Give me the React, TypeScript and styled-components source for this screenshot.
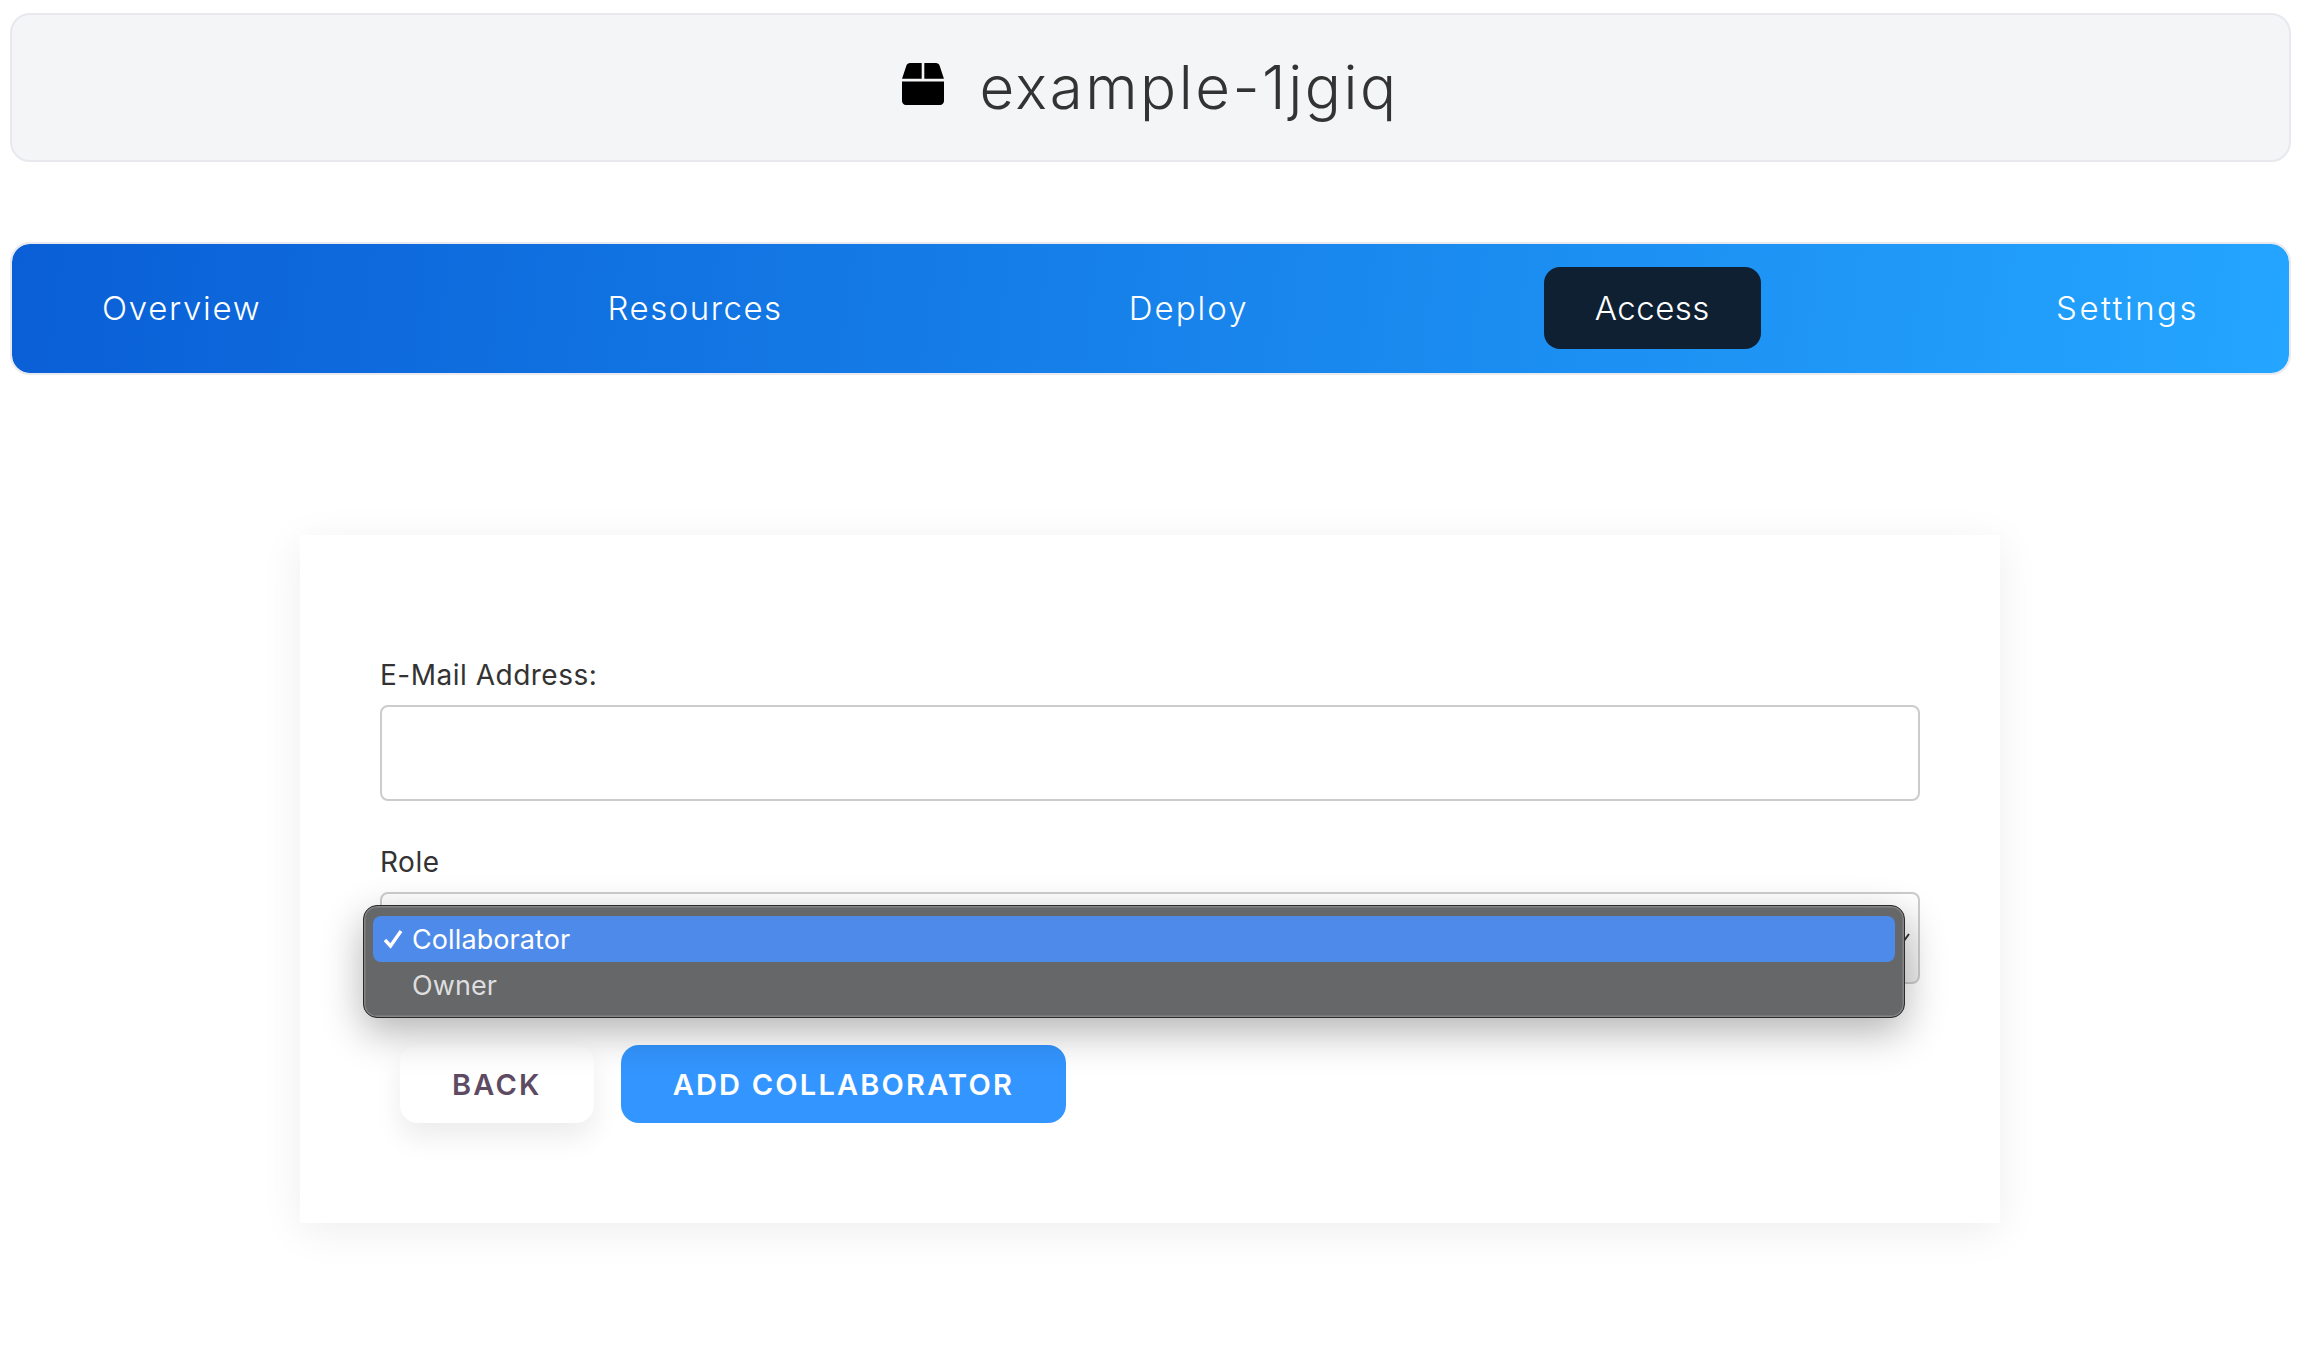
import React from 'react';
import styled, { createGlobalStyle } from 'styled-components';
import { FaBox } from 'react-icons/fa';

const Global = createGlobalStyle`
  html, body { margin: 0; padding: 0; background: #fff; }
  body { font-family: "Inter", "Liberation Sans", sans-serif; color: #333; }
  * { box-sizing: border-box; }
`;

const Page = styled.div`
  padding: 13px 13px 139px 10px;
`;

const Header = styled.header`
  height: 149px;
  background: #f4f5f7;
  border: 2px solid #e8e8ee;
  border-radius: 20px;
  display: flex;
  align-items: center;
  justify-content: center;
  gap: 35px;
  padding-bottom: 2px;
`;

const BoxIcon = styled(FaBox)`
  width: 42px;
  height: 42px;
  margin-top: -5px;
  color: #000;
`;

const Title = styled.h1`
  margin: 0;
  font-size: 60px;
  font-weight: 300;
  line-height: 72px;
  color: #333;
  letter-spacing: 2.5px;
`;

const Nav = styled.nav`
  margin-top: 80px;
  height: 133px;
  border: 2px solid #e9e9f0;
  border-radius: 20px;
  padding: 0 39px 1px;
  display: flex;
  align-items: center;
  justify-content: space-between;
  background: linear-gradient(97deg, #0a5fd6 0%, #24a5ff 100%) padding-box;
`;

const NavItem = styled.a<{ $active?: boolean; $track: number }>`
  height: 82px;
  padding: 0 51px;
  display: flex;
  align-items: center;
  border-radius: 16px;
  font-size: 33px;
  font-weight: 300;
  color: #fff;
  letter-spacing: ${p => p.$track}px;
  background: ${p => (p.$active ? '#0f2033' : 'transparent')};
`;

const Card = styled.main`
  width: 1700px;
  margin: 160px 0 0 290px;
  padding: 120px 80px 100px;
  background: #fff;
  box-shadow: 0 8px 40px rgba(0, 0, 0, 0.07);
`;

const Label = styled.label`
  display: block;
  height: 40px;
  line-height: 40px;
  margin-bottom: 10px;
  font-size: 28px;
  font-weight: 400;
  color: #333;
  letter-spacing: 0.5px;
`;

const Input = styled.input`
  display: block;
  width: 100%;
  height: 96px;
  border: 2px solid #ccc;
  border-radius: 8px;
  background: #fff;
  margin-bottom: 41px;
`;

const SelectWrap = styled.div`
  position: relative;
  height: 92px;
`;

const SelectBox = styled.div`
  height: 100%;
  border: 2px solid #ccc;
  border-radius: 8px;
  background: linear-gradient(#fff, #ededed);
`;

const Chevron = styled.svg`
  position: absolute;
  right: 5px;
  top: 38px;
  width: 18px;
  height: 14px;
`;

const Menu = styled.div`
  position: absolute;
  left: -17px;
  right: 15px;
  top: 13px;
  height: 113px;
  padding: 10px 9px 9px;
  border-radius: 14px;
  background: #666769;
  border: 1.5px solid #2b2b2b;
  box-shadow: inset 0 0 0 1.5px #858585, 0 14px 40px rgba(0, 0, 0, 0.3);
`;

const MenuRow = styled.div<{ $selected?: boolean }>`
  height: 46px;
  display: flex;
  align-items: center;
  padding-left: 39px;
  position: relative;
  border-radius: 8px;
  font-size: 27px;
  font-weight: 400;
  letter-spacing: 0.1px;
  color: ${p => (p.$selected ? '#fff' : '#dedede')};
  background: ${p => (p.$selected ? '#4d8ae9' : 'transparent')};
`;

const Check = styled.svg`
  position: absolute;
  left: 10px;
  top: 13px;
  width: 20px;
  height: 20px;
`;

const Actions = styled.div`
  margin-top: 61px;
  padding-left: 20px;
  display: flex;
  gap: 27px;
`;

const Button = styled.button<{ $primary?: boolean }>`
  height: 78px;
  padding: 0 52px;
  border: none;
  border-radius: 18px;
  font-family: inherit;
  font-size: 29px;
  font-weight: 600;
  letter-spacing: 2.2px;
  color: ${p => (p.$primary ? '#fff' : '#5e4b63')};
  background: ${p => (p.$primary ? '#3395ff' : '#fff')};
  box-shadow: ${p => (p.$primary ? 'none' : '0 14px 28px rgba(0, 0, 0, 0.08)')};
`;

const tabs = [
  { name: 'Overview', track: 1.7 },
  { name: 'Resources', track: 1.5 },
  { name: 'Deploy', track: 2 },
  { name: 'Access', track: 0.5 },
  { name: 'Settings', track: 2.5 },
];

export default function App() {
  return (
    <Page>
      <Global />
      <Header>
        <BoxIcon />
        <Title>example-1jgiq</Title>
      </Header>
      <Nav>
        {tabs.map(t => (
          <NavItem key={t.name} $track={t.track} $active={t.name === 'Access'}>{t.name}</NavItem>
        ))}
      </Nav>
      <Card>
        <Label>E-Mail Address:</Label>
        <Input type="text" />
        <Label>Role</Label>
        <SelectWrap>
          <SelectBox />
          <Chevron viewBox="0 0 18 14">
            <path d="M2 9 L6 12 L12 4" fill="none" stroke="#333" strokeWidth="2" />
          </Chevron>
          <Menu>
            <MenuRow $selected>
              <Check viewBox="0 0 20 20">
                <path d="M2 11 L7.5 17 L18 2" fill="none" stroke="#fff" strokeWidth="3.4" />
              </Check>
              Collaborator
            </MenuRow>
            <MenuRow>Owner</MenuRow>
          </Menu>
        </SelectWrap>
        <Actions>
          <Button>BACK</Button>
          <Button $primary>ADD COLLABORATOR</Button>
        </Actions>
      </Card>
    </Page>
  );
}
